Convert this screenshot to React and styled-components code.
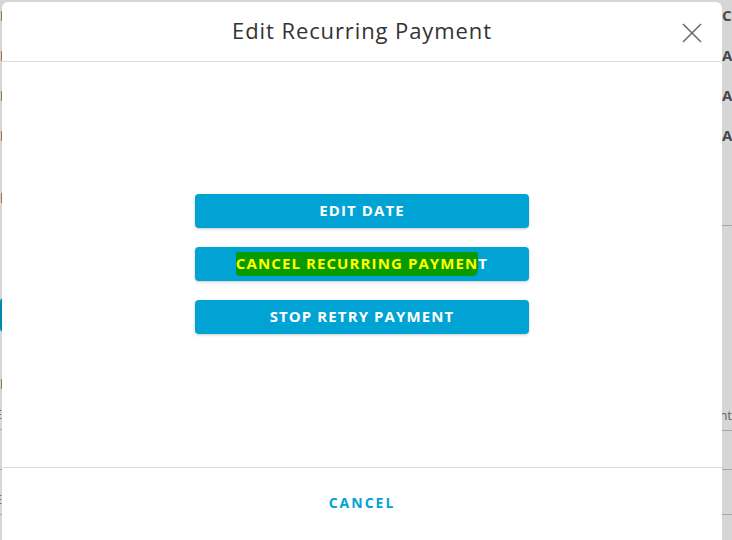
import React from 'react';
import styled, { createGlobalStyle } from 'styled-components';

const GlobalStyle = createGlobalStyle`
  html, body {
    margin: 0;
    padding: 0;
    background: #ffffff;
    font-family: 'Open Sans', 'DejaVu Sans', sans-serif;
  }
`;

const Page = styled.div`
  position: relative;
  height: 540px;
  overflow: hidden;
  background: #ffffff;
  display: flex;
  justify-content: space-between;
`;

const PageColumn = styled.div`
  display: flex;
  flex-direction: column;
  width: ${(p) => p.$width}px;
  margin-top: -5px;
`;

const PageRow = styled.div`
  height: 40px;
  flex-shrink: 0;
  display: flex;
  align-items: center;
  font-size: 15px;
  font-weight: 700;
  color: #555;
  white-space: nowrap;
`;

const PageGap = styled.div`
  height: ${(p) => p.$h}px;
  flex-shrink: 0;
  box-sizing: border-box;
  border-bottom: ${(p) => (p.$line ? '1px solid #c8c8c8' : 'none')};
`;

const PageButton = styled.div`
  height: 34px;
  width: 120px;
  flex-shrink: 0;
  background: #00a3d3;
  border-radius: 4px;
`;

const PageLine = styled.div`
  height: ${(p) => p.$h}px;
  flex-shrink: 0;
  border-bottom: 1px solid #c8c8c8;
  font-size: 13px;
  color: #777;
  display: flex;
  align-items: flex-end;
  justify-content: flex-end;
  padding-bottom: 6px;
  box-sizing: border-box;
  white-space: nowrap;
`;

const Overlay = styled.div`
  position: absolute;
  inset: 0;
  background: rgba(0, 0, 0, 0.16);
`;

const Modal = styled.div`
  position: absolute;
  top: 2px;
  left: 2px;
  width: 720px;
  height: 560px;
  background: #ffffff;
  border-radius: 6px;
  display: flex;
  flex-direction: column;
`;

const Header = styled.div`
  position: relative;
  height: 60px;
  flex-shrink: 0;
  box-sizing: border-box;
  padding-bottom: 4px;
  border-bottom: 1px solid #dcdcdc;
  display: flex;
  align-items: center;
  justify-content: center;
`;

const Title = styled.h2`
  margin: 0;
  font-size: 22px;
  font-weight: 400;
  color: #333;
  letter-spacing: 0.9px;
`;

const Close = styled.button`
  position: absolute;
  right: 19px;
  top: 20px;
  width: 22px;
  height: 22px;
  padding: 0;
  border: none;
  background: none;
  cursor: pointer;
`;

const Body = styled.div`
  height: 405px;
  flex-shrink: 0;
  box-sizing: border-box;
  padding-bottom: 1px;
  display: flex;
  flex-direction: column;
  align-items: center;
  justify-content: center;
  gap: 19px;
`;

const ActionButton = styled.button`
  width: 334px;
  height: 34px;
  padding: 0 0 2px;
  border: none;
  border-radius: 4px;
  background: #00a3d3;
  color: #ffffff;
  font-family: 'Open Sans', 'DejaVu Sans', sans-serif;
  font-size: 15px;
  font-weight: 700;
  letter-spacing: 1.1px;
  box-shadow: 0 1px 3px rgba(0, 0, 0, 0.22);
  cursor: pointer;
`;

const Marker = styled.span`
  background: #089a00;
  color: #ffff00;
  padding: 1px 0 3px;
  border-radius: 2px 3px 6px 4px;
`;

const Footer = styled.div`
  border-top: 1px solid #dcdcdc;
  height: 72px;
  box-sizing: border-box;
  padding-bottom: 2px;
  display: flex;
  align-items: center;
  justify-content: center;
`;

const LinkButton = styled.button`
  border: none;
  background: none;
  color: #00a3d3;
  font-family: 'Open Sans', 'DejaVu Sans', sans-serif;
  font-size: 14px;
  font-weight: 700;
  letter-spacing: 2px;
  cursor: pointer;
`;

const App = () => {
  return (
    <>
      <GlobalStyle />
      <Page>
        <PageColumn $width={2}>
          <PageRow>M</PageRow>
          <PageRow>N</PageRow>
          <PageRow>N</PageRow>
          <PageRow>N</PageRow>
          <PageGap $h={22} />
          <PageRow>B</PageRow>
          <PageGap $h={81} />
          <PageButton />
          <PageGap $h={31} />
          <PageRow>L</PageRow>
          <PageLine $h={27}>E</PageLine>
          <PageLine $h={40} />
          <PageLine $h={45}>E</PageLine>
        </PageColumn>
        <PageColumn $width={10}>
          <PageRow>Card</PageRow>
          <PageRow>Amount</PageRow>
          <PageRow>Amount</PageRow>
          <PageRow>Amount</PageRow>
          <PageGap $h={71} $line />
          <PageLine $h={205}>nt</PageLine>
          <PageLine $h={39} />
          <PageLine $h={45} />
        </PageColumn>
        <Overlay />
        <Modal>
          <Header>
            <Title>Edit Recurring Payment</Title>
            <Close aria-label="Close">
              <svg width="22" height="22" viewBox="0 0 22 22">
                <path d="M2 2 L20 20 M20 2 L2 20" stroke="#6b6b6b" strokeWidth="1.6" fill="none" />
              </svg>
            </Close>
          </Header>
          <Body>
            <ActionButton>EDIT DATE</ActionButton>
            <ActionButton>
              <Marker>CANCEL RECURRING PAYMEN</Marker>T
            </ActionButton>
            <ActionButton>STOP RETRY PAYMENT</ActionButton>
          </Body>
          <Footer>
            <LinkButton>CANCEL</LinkButton>
          </Footer>
        </Modal>
      </Page>
    </>
  );
};

export default App;
